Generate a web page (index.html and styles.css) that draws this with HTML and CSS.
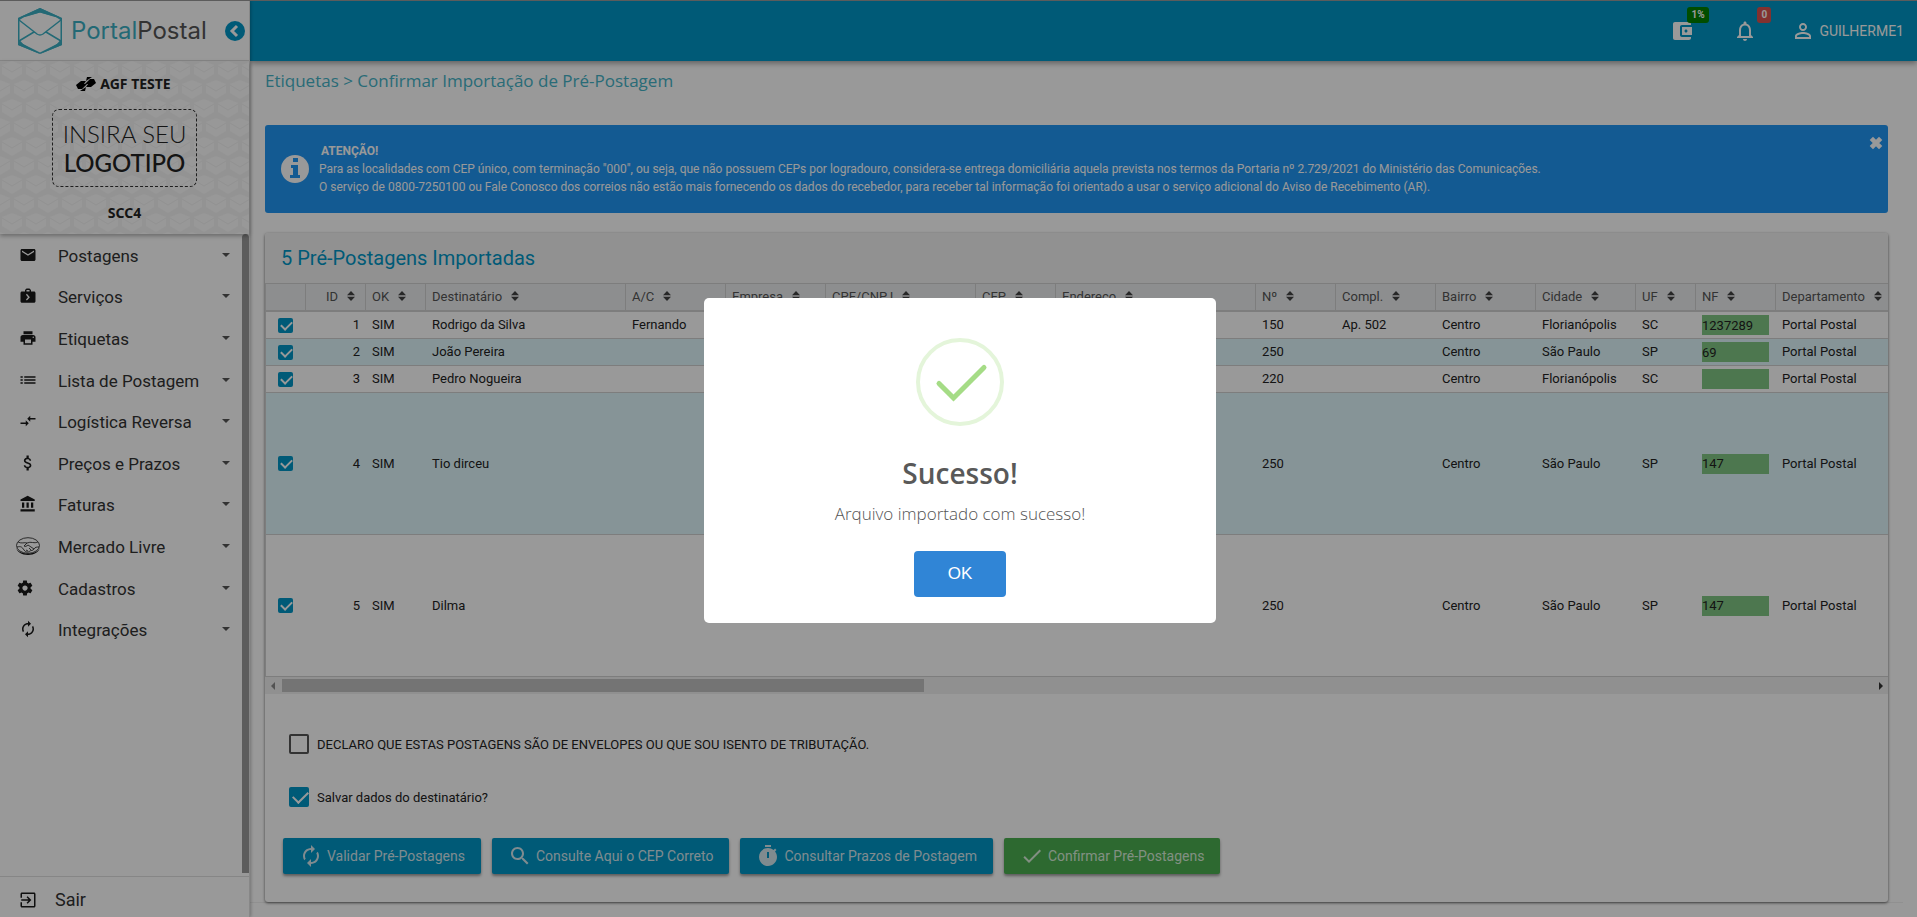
FILE: index.html
```html
<!DOCTYPE html>
<html lang="pt-BR">
<head>
<meta charset="utf-8">
<title>Portal Postal - Confirmar Importação</title>
<link rel="stylesheet" href="styles.css">
</head>
<body>
<svg class="defs" aria-hidden="true">
  <symbol id="i-mail" viewBox="0 0 24 24"><path d="M20 4H4c-1.1 0-1.99.9-1.99 2L2 18c0 1.1.9 2 2 2h16c1.1 0 2-.9 2-2V6c0-1.1-.9-2-2-2zm0 4l-8 5-8-5V6l8 5 8-5v2z"/></symbol>
  <symbol id="i-case" viewBox="0 0 24 24"><path fill-rule="evenodd" d="M10 2h4l2 2v2h4c1.100 0 2 .9 2 2v11c0 1.100-.9 2-2 2H4c-1.100 0-2-.9-2-2V8c0-1.100.9-2 2-2h4V4zM10 4v2h4V4zM10.500 9L9.300 10.200 12 13.500 9.300 16.800 10.500 18 14.500 13.500z"/></symbol>
  <symbol id="i-print" viewBox="0 0 24 24"><path d="M19 8H5c-1.66 0-3 1.34-3 3v6h4v4h12v-4h4v-6c0-1.66-1.34-3-3-3zm-3 11H8v-5h8v5zm3-7c-.55 0-1-.45-1-1s.45-1 1-1 1 .45 1 1-.45 1-1 1zm-1-9H6v4h12V3z"/></symbol>
  <symbol id="i-list" viewBox="0 0 24 24"><path d="M2 13h3v-2H2v2zm0 4h3v-2H2v2zm0-8h3V7H2v2zm5 4h15v-2H7v2zm0 4h15v-2H7v2zM7 7v2h15V7H7z"/></symbol>
  <symbol id="i-arrows" viewBox="0 0 24 24"><path d="M9.010 14H2v2h7.010v3L13 15l-3.990-4v3zm5.980-1v-3H22V8h-7.010V5L11 9l3.990 4z"/></symbol>
  <symbol id="i-money" viewBox="0 0 24 24"><path d="M11.800 10.900c-2.270-.59-3-1.200-3-2.150 0-1.090 1.010-1.850 2.700-1.850 1.780 0 2.440.85 2.500 2.100h2.210c-.07-1.720-1.120-3.300-3.210-3.810V2h-3v3.160c-1.940.42-3.500 1.680-3.500 3.610 0 2.310 1.910 3.460 4.700 4.130 2.500.6 3 1.480 3 2.410 0 .69-.49 1.790-2.700 1.790-2.060 0-2.870-.92-2.980-2.100h-2.200c.12 2.190 1.760 3.420 3.680 3.830V22h3v-3.150c1.950-.37 3.500-1.500 3.500-3.550 0-2.840-2.430-3.810-4.700-4.400z"/></symbol>
  <symbol id="i-bank" viewBox="0 0 24 24"><path d="M4 10v7h3v-7H4zm6 0v7h3v-7h-3zM2 22h19v-3H2v3zm14-12v7h3v-7h-3zm-4.500-9L2 6v2h19V6l-9.500-5z"/></symbol>
  <symbol id="i-gear" viewBox="0 0 24 24"><path d="M19.430 12.980c.04-.32.07-.64.07-.98s-.03-.66-.07-.98l2.110-1.650c.19-.15.24-.42.12-.64l-2-3.460c-.12-.22-.39-.3-.61-.22l-2.490 1c-.52-.4-1.080-.73-1.690-.98l-.38-2.650C14.460 2.180 14.250 2 14 2h-4c-.25 0-.46.18-.49.42l-.38 2.650c-.61.25-1.170.59-1.690.98l-2.490-1c-.23-.09-.49 0-.61.22l-2 3.460c-.13.22-.07.49.12.64l2.110 1.650c-.04.32-.07.65-.07.98s.03.66.07.98l-2.110 1.650c-.19.15-.24.42-.12.64l2 3.460c.12.22.39.3.61.22l2.490-1c.52.4 1.080.73 1.690.98l.38 2.650c.03.24.24.42.49.42h4c.25 0 .46-.18.49-.42l.38-2.650c.61-.25 1.170-.59 1.690-.98l2.490 1c.23.09.49 0 .61-.22l2-3.460c.12-.22.07-.49-.12-.64l-2.110-1.650zM12 15.500c-1.930 0-3.500-1.570-3.500-3.500s1.570-3.500 3.500-3.500 3.500 1.570 3.500 3.500-1.570 3.500-3.500 3.500z"/></symbol>
  <symbol id="i-sync" viewBox="0 0 24 24"><path d="M12 6v3l4-4-4-4v3c-4.420 0-8 3.580-8 8 0 1.570.46 3.030 1.240 4.260L6.700 14.800c-.45-.83-.7-1.790-.7-2.800 0-3.310 2.690-6 6-6zm6.760 1.740L17.300 9.200c.44.84.7 1.790.7 2.800 0 3.310-2.690 6-6 6v-3l-4 4 4 4v-3c4.420 0 8-3.580 8-8 0-1.570-.46-3.030-1.240-4.260z"/></symbol>
  <symbol id="i-exit" viewBox="0 0 24 24"><path d="M10.090 15.590L11.500 17l5-5-5-5-1.410 1.410L12.670 11H3v2h9.670l-2.580 2.590zM20 2H4c-1.110 0-2 .9-2 2v5h2V4h16v16H4v-5H2v5c0 1.100.89 2 2 2h16c1.100 0 2-.9 2-2V4c0-1.100-.9-2-2-2z"/></symbol>
  <symbol id="i-wallet" viewBox="0 0 24 24"><path d="M21 18v1c0 1.100-.9 2-2 2H5c-1.110 0-2-.9-2-2V5c0-1.100.89-2 2-2h14c1.100 0 2 .9 2 2v1h-9c-1.110 0-2 .9-2 2v8c0 1.100.89 2 2 2h9zm-9-2h10V8H12v8zm4-2.500c-.83 0-1.500-.67-1.500-1.500s.67-1.500 1.500-1.500 1.500.67 1.500 1.500-.67 1.500-1.500 1.500z"/></symbol>
  <symbol id="i-bell" viewBox="0 0 24 24"><path d="M12 22c1.100 0 2-.9 2-2h-4c0 1.100.9 2 2 2zm6-6v-5c0-3.070-1.630-5.640-4.500-6.320V4c0-.83-.67-1.500-1.500-1.500s-1.500.67-1.500 1.500v.68C7.640 5.360 6 7.920 6 11v5l-2 2v1h16v-1l-2-2zm-2 1H8v-6c0-2.480 1.510-4.500 4-4.500s4 2.020 4 4.500v6z"/></symbol>
  <symbol id="i-person" viewBox="0 0 24 24"><path d="M12 5.900c1.160 0 2.100.94 2.100 2.100s-.94 2.100-2.100 2.100S9.900 9.160 9.900 8s.94-2.100 2.100-2.100m0 9c2.970 0 6.100 1.460 6.100 2.100v1.100H5.900V17c0-.64 3.130-2.100 6.100-2.100M12 4C9.790 4 8 5.790 8 8s1.790 4 4 4 4-1.790 4-4-1.790-4-4-4zm0 9c-2.670 0-8 1.340-8 4v3h16v-3c0-2.660-5.330-4-8-4z"/></symbol>
  <symbol id="i-search" viewBox="0 0 24 24"><path d="M15.500 14h-.79l-.28-.27C15.410 12.590 16 11.110 16 9.500 16 5.910 13.090 3 9.500 3S3 5.910 3 9.500 5.910 16 9.500 16c1.610 0 3.090-.59 4.230-1.570l.27.28v.79l5 4.990L20.490 19l-4.990-5zm-6 0C7.010 14 5 11.990 5 9.500S7.010 5 9.500 5 14 7.010 14 9.500 11.990 14 9.500 14z"/></symbol>
  <symbol id="i-timer" viewBox="0 0 24 24"><path d="M15 1H9v2h6V1zm-4 13h2V8h-2v6zm8.030-6.610l1.420-1.420c-.43-.51-.9-.99-1.410-1.410l-1.420 1.420C16.070 4.740 14.120 4 12 4c-4.970 0-9 4.030-9 9s4.020 9 9 9 9-4.030 9-9c0-2.120-.74-4.070-1.970-5.610z" fill-rule="evenodd"/></symbol>
  <symbol id="i-check" viewBox="0 0 24 24"><path d="M9 16.170L4.830 12l-1.420 1.410L9 19 21 7l-1.410-1.410z"/></symbol>
  <symbol id="i-sort" viewBox="0 0 8 10"><path d="M4 0L8 4.300H0zM4 10L0 5.700h8z"/></symbol>
  <symbol id="i-caret" viewBox="0 0 8 4"><path d="M0 0h8L4 4z"/></symbol>
</svg>

<div class="app">
  <aside class="sidebar">
    <div class="brand">
      <svg class="brand-mark" viewBox="0 0 44 46" aria-hidden="true">
        <path fill="#3bb0c4" fill-rule="evenodd" d="M22 0L44 10V37L22 46 0 37V10zM22 4.500L7 8.500 1.500 12V32L5 36 22 44.500 39 36l3.500-4V12L37 8.500z"/>
        <path fill="#3bb0c4" d="M22 0L44 10 37 9 22 4.500 7 9 0 10zM0 32l5 4 17 10L0 37zM44 32l-5 4-17 10 22-9z"/>
        <path fill="none" stroke="#3bb0c4" stroke-width="1.500" d="M1 12l18 14q3 2 6 0L43 12M1 33l15-9M43 33l-15-9"/>
      </svg>
      <span class="brand-name"><span class="brand-a">Portal</span>Postal</span>
      <button class="collapse" aria-label="Recolher menu"><svg viewBox="0 0 20 20" aria-hidden="true"><path d="M12 5l-5 5 5 5" fill="none" stroke="#fff" stroke-width="3"/></svg></button>
    </div>
    <div class="agency">
      <svg class="agency-bg" aria-hidden="true">
        <defs><pattern id="env" width="24" height="38" patternUnits="userSpaceOnUse">
          <g fill="#fdfdfd"><path d="M12 0l10 4v9l-10 6-10-6V4zM0 19l10 4v9L0 38l-10-6v-9zM24 19l10 4v9l-10 6-10-6v-9z"/></g>
          <path d="M2 5l10 6 10-6M-10 24L0 30l10-6M14 24l10 6 10-6" fill="none" stroke="#f4f4f4"/>
        </pattern></defs>
        <rect width="100%" height="100%" fill="url(#env)"/>
      </svg>
      <strong class="agency-name"><svg viewBox="0 0 20 14" aria-hidden="true"><path d="M0 8l5-4h5L8 7h3L6 12H2zM4 14l6-4-1 4zM20 6l-5 4h-5l2-3H9l5-5h4zM16 0l-6 4 1-4z"/></svg>AGF TESTE</strong>
      <div class="logo-slot"><span class="slot-thin">INSIRA SEU</span><span class="slot-bold">LOGOTIPO</span></div>
      <strong class="agency-code">SCC4</strong>
    </div>
    <div class="nav-scroll">
      <nav class="nav">
        <a href="#"><svg class="ico"><use href="#i-mail"/></svg><span>Postagens</span><svg class="caret"><use href="#i-caret"/></svg></a>
        <a href="#"><svg class="ico"><use href="#i-case"/></svg><span>Serviços</span><svg class="caret"><use href="#i-caret"/></svg></a>
        <a href="#"><svg class="ico"><use href="#i-print"/></svg><span>Etiquetas</span><svg class="caret"><use href="#i-caret"/></svg></a>
        <a href="#"><svg class="ico"><use href="#i-list"/></svg><span>Lista de Postagem</span><svg class="caret"><use href="#i-caret"/></svg></a>
        <a href="#"><svg class="ico"><use href="#i-arrows"/></svg><span>Logística Reversa</span><svg class="caret"><use href="#i-caret"/></svg></a>
        <a href="#"><svg class="ico"><use href="#i-money"/></svg><span>Preços e Prazos</span><svg class="caret"><use href="#i-caret"/></svg></a>
        <a href="#"><svg class="ico"><use href="#i-bank"/></svg><span>Faturas</span><svg class="caret"><use href="#i-caret"/></svg></a>
        <a href="#"><svg class="ico ico-wide" viewBox="0 0 24 18"><path d="M0 9c0 12 24 12 24 0 0 10-24 10-24 0z"/><g fill="none" stroke="#1a1a1a" stroke-width=".8"><ellipse cx="12" cy="8.500" rx="11.500" ry="7.800"/><path d="M2 5c4 2 6 0 9 1l-3 3c1 1 3 0 4-1l6 4M22 5c-4 2-7-1-11 1M1 10c4-1 5 0 7 3s5 2 6 1 3 0 4-2 3-2 5-2M10 13l2 1M13 11l2 2"/></g></svg><span>Mercado Livre</span><svg class="caret"><use href="#i-caret"/></svg></a>
        <a href="#"><svg class="ico ico-gear"><use href="#i-gear"/></svg><span>Cadastros</span><svg class="caret"><use href="#i-caret"/></svg></a>
        <a href="#"><svg class="ico"><use href="#i-sync"/></svg><span>Integrações</span><svg class="caret"><use href="#i-caret"/></svg></a>
      </nav>
      <div class="nav-bar"></div>
    </div>
    <a class="logout" href="#"><svg class="ico"><use href="#i-exit"/></svg>Sair</a>
  </aside>

  <div class="main">
    <header class="topbar">
      <button class="top-btn top-wallet" aria-label="Saldo"><svg class="i24"><use href="#i-wallet"/></svg><span class="badge badge-green">1%</span></button>
      <button class="top-btn top-bell" aria-label="Notificações"><svg class="i24"><use href="#i-bell"/></svg><span class="badge badge-red">0</span></button>
      <a class="user" href="#"><svg class="i24"><use href="#i-person"/></svg>GUILHERME1</a>
    </header>

    <main class="content">
      <div class="page">
      <h1 class="crumb">Etiquetas &gt; Confirmar Importação de Pré-Postagem</h1>

      <section class="alert">
        <svg class="alert-ico" viewBox="0 0 28 28" aria-hidden="true"><circle cx="14" cy="14" r="14" fill="#fff"/><path fill="#2196f3" d="M12 3h5v4h-5zM10 10h7v10h2v3H9v-3h3v-7h-2z"/></svg>
        <div class="alert-text">
          <strong>ATENÇÃO!</strong>
          <p>Para as localidades com CEP único, com terminação "000", ou seja, que não possuem CEPs por logradouro, considera-se entrega domiciliária aquela prevista nos termos da Portaria nº 2.729/2021 do Ministério das Comunicações.</p>
          <p>O serviço de 0800-7250100 ou Fale Conosco dos correios não estão mais fornecendo os dados do recebedor, para receber tal informação foi orientado a usar o serviço adicional do Aviso de Recebimento (AR).</p>
        </div>
        <button class="close" aria-label="Fechar"><svg viewBox="0 0 12 12" aria-hidden="true"><path d="M2 2l8 8M10 2l-8 8" stroke="#fff" stroke-width="4"/></svg></button>
      </section>

      <section class="card">
        <h2 class="card-head">5 Pré-Postagens Importadas</h2>
        <div class="table-wrap">
          <table class="grid">
            <colgroup><col class="w40"><col class="w60"><col class="w60"><col class="w200"><col class="w100"><col class="w100"><col class="w150"><col class="w80"><col class="w200"><col class="w80"><col class="w100"><col class="w100"><col class="w100"><col class="w60"><col class="w80"><col class="w120"></colgroup>
            <thead><tr>
              <th></th>
              <th class="num id-head">ID<svg><use href="#i-sort"/></svg></th>
              <th>OK<svg><use href="#i-sort"/></svg></th>
              <th>Destinatário<svg><use href="#i-sort"/></svg></th>
              <th>A/C<svg><use href="#i-sort"/></svg></th>
              <th>Empresa<svg><use href="#i-sort"/></svg></th>
              <th>CPF/CNPJ<svg><use href="#i-sort"/></svg></th>
              <th>CEP<svg><use href="#i-sort"/></svg></th>
              <th>Endereço<svg><use href="#i-sort"/></svg></th>
              <th>Nº<svg><use href="#i-sort"/></svg></th>
              <th>Compl.<svg><use href="#i-sort"/></svg></th>
              <th>Bairro<svg><use href="#i-sort"/></svg></th>
              <th>Cidade<svg><use href="#i-sort"/></svg></th>
              <th>UF<svg><use href="#i-sort"/></svg></th>
              <th>NF<svg><use href="#i-sort"/></svg></th>
              <th>Departamento<svg><use href="#i-sort"/></svg></th>
            </tr></thead>
            <tbody>
              <tr><td><input type="checkbox" class="tick" checked aria-label="Selecionar 1"></td><td class="num">1</td><td>SIM</td><td>Rodrigo da Silva</td><td>Fernando</td><td></td><td></td><td></td><td></td><td>150</td><td>Ap. 502</td><td>Centro</td><td>Florianópolis</td><td>SC</td><td><input class="nf" value="1237289" aria-label="NF 1"></td><td>Portal Postal</td></tr>
              <tr><td><input type="checkbox" class="tick" checked aria-label="Selecionar 2"></td><td class="num">2</td><td>SIM</td><td>João Pereira</td><td></td><td></td><td></td><td></td><td></td><td>250</td><td></td><td>Centro</td><td>São Paulo</td><td>SP</td><td><input class="nf" value="69" aria-label="NF 2"></td><td>Portal Postal</td></tr>
              <tr><td><input type="checkbox" class="tick" checked aria-label="Selecionar 3"></td><td class="num">3</td><td>SIM</td><td>Pedro Nogueira</td><td></td><td></td><td></td><td></td><td></td><td>220</td><td></td><td>Centro</td><td>Florianópolis</td><td>SC</td><td><input class="nf" value="" aria-label="NF 3"></td><td>Portal Postal</td></tr>
              <tr class="tall"><td><input type="checkbox" class="tick" checked aria-label="Selecionar 4"></td><td class="num">4</td><td>SIM</td><td>Tio dirceu</td><td></td><td></td><td></td><td></td><td></td><td>250</td><td></td><td>Centro</td><td>São Paulo</td><td>SP</td><td><input class="nf" value="147" aria-label="NF 4"></td><td>Portal Postal</td></tr>
              <tr class="tall"><td><input type="checkbox" class="tick" checked aria-label="Selecionar 5"></td><td class="num">5</td><td>SIM</td><td>Dilma</td><td></td><td></td><td></td><td></td><td></td><td>250</td><td></td><td>Centro</td><td>São Paulo</td><td>SP</td><td><input class="nf" value="147" aria-label="NF 5"></td><td>Portal Postal</td></tr>
            </tbody>
          </table>
        </div>
        <div class="hbar" aria-hidden="true">
          <svg viewBox="0 0 4 8"><path d="M4 0v8L0 4z" fill="#8a8a8a"/></svg>
          <div class="track"><div class="thumb"></div></div>
          <svg viewBox="0 0 4 8"><path d="M0 0v8l4-4z" fill="#333"/></svg>
        </div>
        <div class="card-body">
          <label class="opt"><input type="checkbox" class="tick tick-lg"><span>DECLARO QUE ESTAS POSTAGENS SÃO DE ENVELOPES OU QUE SOU ISENTO DE TRIBUTAÇÃO.</span></label>
          <label class="opt"><input type="checkbox" class="tick tick-lg" checked><span>Salvar dados do destinatário?</span></label>
          <div class="actions">
            <button class="btn"><svg><use href="#i-sync"/></svg>Validar Pré-Postagens</button>
            <button class="btn"><svg><use href="#i-search"/></svg>Consulte Aqui o CEP Correto</button>
            <button class="btn"><svg><use href="#i-timer"/></svg>Consultar Prazos de Postagem</button>
            <button class="btn btn-green"><svg><use href="#i-check"/></svg>Confirmar Pré-Postagens</button>
          </div>
        </div>
      </section>
      </div>
    </main>
  </div>
</div>

<div class="overlay">
  <div class="dialog" role="dialog" aria-modal="true" aria-labelledby="dlg-title">
    <svg class="ok-ico" viewBox="0 0 88 88" aria-hidden="true"><circle cx="44" cy="44" r="42" fill="none" stroke="#e4f5da" stroke-width="4"/><path d="M23 45.500L37.500 60 68 29.500" fill="none" stroke="#a5dc86" stroke-width="5" stroke-linecap="round"/></svg>
    <h2 id="dlg-title">Sucesso!</h2>
    <p>Arquivo importado com sucesso!</p>
    <button class="ok">OK</button>
  </div>
</div>
</body>
</html>
```
FILE: styles.css
```css
* { box-sizing: border-box; }
body { margin: 0; font-family: Roboto, sans-serif; font-size: 13px; color: #222; background: #fff; }
h1, h2, p { margin: 0; }
button { border: 0; padding: 0; background: none; font: inherit; color: inherit; }
a { color: inherit; text-decoration: none; }
svg { fill: currentColor; flex: none; }
.defs { position: absolute; width: 0; height: 0; }

.app { display: flex; height: 100vh; border-top: 1px solid #999; overflow: hidden; }

/* Sidebar */
.sidebar { width: 250px; flex: none; display: flex; flex-direction: column; border-right: 1px solid #e2e2e2; box-shadow: 1px 0 3px rgba(0,0,0,.25); position: relative; z-index: 2; background: #fff; }
.brand { height: 60px; display: flex; align-items: center; padding: 0 4px 0 18px; border-bottom: 1px solid #e0e0e0; }
.brand-mark { width: 44px; height: 46px; }
.brand-name { font-family: Inter, sans-serif; font-size: 24px; line-height: 30px; color: #555; margin-left: 9px; flex: 1; }
.brand-a { color: #3bb0c4; }
.collapse { width: 20px; height: 20px; border-radius: 50%; background: #0097c7; }
.collapse svg { display: block; width: 20px; height: 20px; }

.agency { height: 173px; position: relative; display: flex; flex-direction: column; align-items: center; padding-top: 14px; background: #f6f6f6; box-shadow: 0 2px 4px rgba(0,0,0,.3); font-family: "Noto Sans", sans-serif; }
.agency > * { position: relative; }
.agency .agency-bg { position: absolute; inset: 0; width: 100%; height: 100%; }
.agency-name, .agency-code { display: flex; align-items: center; gap: 4px; font-size: 14px; line-height: 18px; }
.agency-name { padding-right: 2px; }
.agency-name svg { width: 20px; height: 14px; fill: #000; }
.logo-slot { width: 145px; height: 78px; margin: 16px 0 17px; border: 1px dashed #333; border-radius: 7px; display: flex; flex-direction: column; align-items: center; justify-content: center; font-family: Lato, sans-serif; font-size: 24px; line-height: 29px; }
.slot-thin { font-weight: 300; }
.slot-bold { font-weight: 500; }

.nav-scroll { flex: 1; display: flex; justify-content: space-between; padding-bottom: 3px; }
.nav { flex: 1; height: 416px; display: grid; grid-auto-rows: 1fr; font-size: 17px; }
.nav a { display: flex; align-items: center; padding: 0 12px 0 16px; }
.nav span { flex: 1; margin-left: 18px; padding-top: 2px; color: #333; }
.ico { width: 18px; height: 18px; margin: 0 3px; color: #1a1a1a; }
.ico-wide { width: 24px; margin: 0; }
.ico-gear { margin: 0 6px 0 0; }
.caret { width: 8px; height: 4px; color: #555; }
.nav-bar { width: 7px; border-radius: 4px 4px 0 0; background: #999; }
.logout { height: 41px; border-top: 1px solid #e0e0e0; display: flex; align-items: center; gap: 15px; padding: 5px 16px 0; font-size: 18px; color: #333; }

/* Top bar */
.main { flex: 1; min-width: 0; display: flex; flex-direction: column; }
.topbar { height: 60px; flex: none; background: #0097c7; box-shadow: 0 2px 6px rgba(0,0,0,.4); display: flex; justify-content: flex-end; align-items: center; padding-right: 13px; color: #fff; z-index: 1; }
.top-btn { position: relative; width: 24px; height: 24px; }
.top-wallet { margin-right: 39px; }
.top-bell { margin-right: 34px; }
.i24 { display: block; width: 24px; height: 24px; }
.badge { position: absolute; left: 17px; top: -12px; padding: 0 4px; height: 16px; line-height: 16px; border-radius: 3px; font-size: 10px; font-weight: 700; }
.badge-green { background: #008000; }
.badge-red { background: #d9534f; left: 24px; }
.user { display: flex; align-items: center; gap: 4px; font-size: 14px; }

/* Content */
.content { flex: 1; overflow: hidden; padding-right: 14px; }
.page { padding: 8px 15px 0; border-bottom: 1px solid #f0f0f0; }
.crumb { font-family: "Open Sans", sans-serif; font-weight: 400; font-size: 17px; line-height: 24px; color: #45b3c7; margin-bottom: 32px; }
.alert { display: flex; align-items: center; gap: 10px; height: 88px; padding: 0 5px 0 16px; background: #2196f3; color: #fff; border-radius: 3px; margin-bottom: 20px; font-size: 12px; line-height: 18px; }
.alert-ico { width: 28px; height: 28px; }
.alert-text { flex: 1; min-width: 0; }
.alert-text strong { margin-left: 2px; }
.close { align-self: flex-start; margin-top: 11px; width: 14px; height: 14px; }
.close svg { display: block; width: 14px; height: 14px; }

.card { background: #fff; border-radius: 3px; box-shadow: 0 1px 3px rgba(0,0,0,.6); }
.card-head { height: 50px; padding: 0 16px; background: #f2f2f2; border-radius: 3px 3px 0 0; color: #0097c7; font-size: 20px; font-weight: 400; line-height: 50px; }
.table-wrap { overflow: hidden; border-left: 1px solid #d0d0d0; }
.grid { table-layout: fixed; width: 1629px; border-spacing: 0; font-size: 13px; line-height: 16px; }
.w40 { width: 40px; } .w60 { width: 60px; } .w80 { width: 80px; } .w100 { width: 100px; }
.w120 { width: 120px; } .w150 { width: 150px; } .w200 { width: 200px; }
.grid th { height: 29px; padding: 0 0 0 6px; text-align: left; font-weight: 400; color: #555; background: #ebedef; border-top: 1px solid #d0d0d0; border-bottom: 2px solid #d0d0d0; border-right: 1px solid #d0d0d0; white-space: nowrap; }
.grid th svg { width: 8px; height: 10px; margin-left: 9px; color: #444; }
.grid td { height: 27px; padding: 0 6px; border-bottom: 1px solid #d0d0d0; white-space: nowrap; color: #222; }
.grid .tall td { height: 142px; }
.grid tbody tr:nth-child(even) { background: #e0f7fc; }
.grid .num { text-align: right; }
.grid .id-head { padding-right: 10px; }
.tick { appearance: none; display: block; width: 15px; height: 15px; margin: 0 0 0 6px; border: 2px solid #555; border-radius: 2px; }
.tick:checked { border: 0; background: #0097c7; }
.tick:checked::after { content: ""; display: block; width: 5px; height: 9px; margin: 1px 0 0 5px; border: solid #fff; border-width: 0 2px 2px 0; transform: rotate(45deg); }
.tick-lg { width: 20px; height: 20px; margin: 0; }
.tick-lg:checked::after { width: 7px; height: 13px; margin: 1px 0 0 7px; }
.nf { display: block; width: 67px; height: 20px; padding: 0; border: 0; background: #81c784; font: inherit; color: #222; }
.hbar { display: flex; align-items: center; height: 17px; padding: 0 5px 0 6px; background: #f1f1f1; }
.hbar svg { width: 4px; height: 8px; }
.track { flex: 1; margin: 0 7px; }
.thumb { width: 40.4%; height: 13px; background: #c1c1c1; }
.card-body { padding: 40px 18px 28px; }
.opt { display: flex; width: max-content; align-items: center; gap: 8px; margin: 0 0 33px 6px; height: 20px; }
.actions { display: flex; gap: 11px; margin-top: -2px; }
.btn { height: 36px; display: flex; align-items: center; gap: 4px; padding: 0 16px; border-radius: 2px; background: #0097c7; color: #d5e8ef; font-size: 14px; box-shadow: 0 2px 3px rgba(0,0,0,.4); }
.btn svg { width: 24px; height: 24px; }
.btn-green { background: #4caf50; color: #d9efda; }

/* Dialog */
.overlay { position: fixed; inset: 0; z-index: 10; background: rgba(0,0,0,.4); display: flex; align-items: center; justify-content: center; padding: 4px 0 0 3px; }
.dialog { width: 512px; padding: 40px 20px 26px; border-radius: 5px; background: #fff; display: flex; flex-direction: column; align-items: center; font-family: "Open Sans", sans-serif; }
.ok-ico { width: 88px; height: 88px; }
.dialog h2 { margin-top: 27px; font-size: 28px; line-height: 40px; font-weight: 600; color: #595959; }
.dialog p { margin: 8px 0 24px; font-size: 17px; line-height: 26px; font-weight: 300; color: #545454; }
.ok { width: 92px; height: 46px; border-radius: 4px; background: #3085d6; color: #fff; font-family: "Liberation Sans", sans-serif; font-size: 17px; }
```
